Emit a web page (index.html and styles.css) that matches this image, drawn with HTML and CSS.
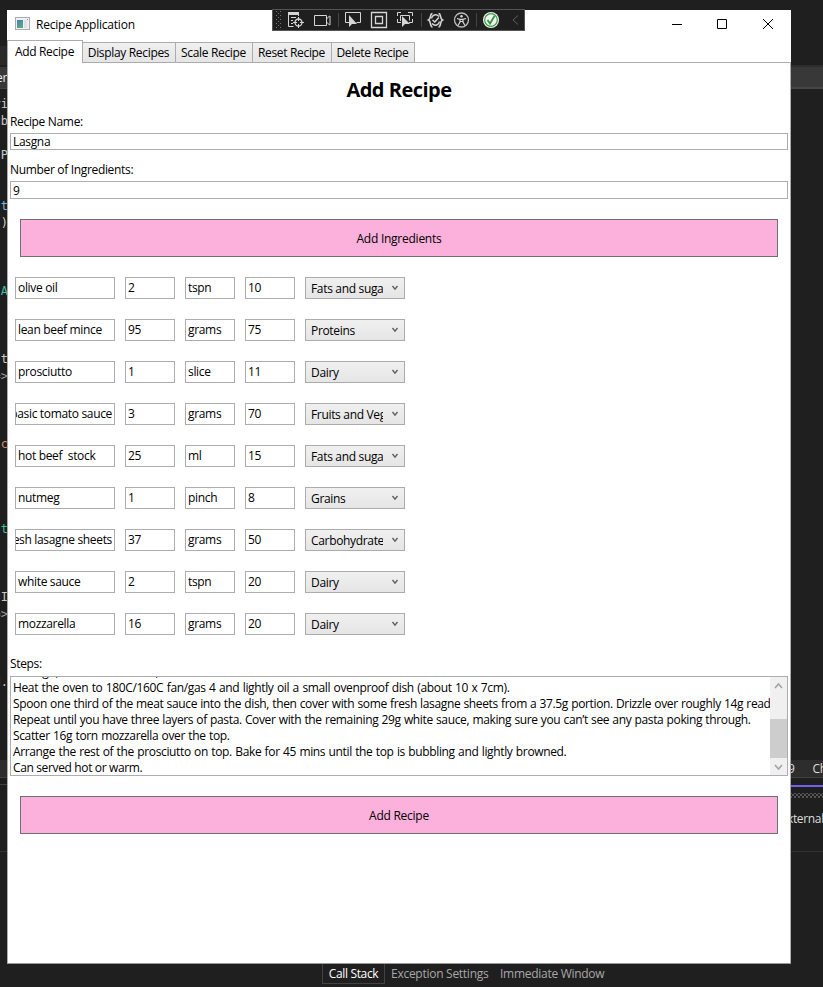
FILE: index.html
```html
<!DOCTYPE html>
<html lang="en">
<head>
<meta charset="utf-8">
<title>Recipe Application</title>
<link rel="stylesheet" href="styles.css">
</head>
<body>
<div class="desktop">
  <aside class="gutter-left">
    <div class="dock-top"></div>
    <div class="dock-tab"><span>er</span></div>
    <pre class="code"><b>ri</b>
<b>ub</b>

<b>P</b>


<b class="blue">ct</b>
<b>()</b>



<b class="teal">tA</b>



<b>It</b>
<b class="dim">=&gt;</b>



<b class="orange">tc</b>




<b class="teal">nt</b>



<b>dI</b>
<b class="dim">=&gt;</b>



<b><i>d</i>.</b>
</pre>
    <div class="status-left"></div>
    <div class="rule-left"></div>
    <div class="rule-low"></div>
  </aside>

  <main class="window">
    <header class="titlebar">
      <svg class="app-icon" width="15" height="13" viewBox="0 0 15 13"><defs><linearGradient id="g" x1="0" y1="0" x2="0.6" y2="1"><stop offset="0" stop-color="#4b7dae"/><stop offset="1" stop-color="#55ad87"/></linearGradient></defs><rect x=".5" y=".5" width="14" height="12" fill="#eef0f1" stroke="#a9adb1"/><rect x="2" y="3" width="6" height="8" fill="url(#g)"/><path d="M9 3h3v8H9z" fill="#dfe2e4"/><path d="M12 2h1v1h-1z" fill="#7d96ad"/></svg>
      <span class="title">Recipe Application</span>
      <svg class="controls" width="102" height="12" viewBox="0 0 102 12" fill="none" stroke="#000"><path d="M0 6.5h10M45.5 1.5h9v9h-9zM91 1l10 10M101 1L91 11"/></svg>
    </header>
    <nav class="tabs">
      <span class="tab active">Add Recipe</span>
      <span class="tab t2">Display Recipes</span>
      <span class="tab t3">Scale Recipe</span>
      <span class="tab t4">Reset Recipe</span>
      <span class="tab t5">Delete Recipe</span>
    </nav>
    <section class="page">
      <h1>Add Recipe</h1>
      <label>Recipe Name:</label>
      <div class="field first">Lasgna</div>
      <label>Number of Ingredients:</label>
      <div class="field">9</div>
      <button>Add Ingredients</button>
      <div class="ingredients" id="ingredients"></div>
      <label class="steps-label">Steps:</label>
      <div class="steps">
        <div class="steps-text">
          <p class="cut">through, about 20 minutes, to make the sauce.</p>
          <p class="w7">Heat the oven to 180C/160C fan/gas 4 and lightly oil a small ovenproof dish (about 10 x 7cm).</p>
          <p class="w4">Spoon one third of the meat sauce into the dish, then cover with some fresh lasagne sheets from a 37.5g portion. Drizzle over roughly 14g read</p>
          <p class="w4">Repeat until you have three layers of pasta. Cover with the remaining 29g white sauce, making sure you can’t see any pasta poking through.</p>
          <p>Scatter 16g torn mozzarella over the top.</p>
          <p>Arrange the rest of the prosciutto on top. Bake for 45 mins until the top is bubbling and lightly browned.</p>
          <p class="w0">Can served hot or warm.</p>
        </div>
        <div class="scrollbar">
          <svg width="17" height="17" viewBox="0 0 17 17" fill="none" stroke="#a3a3a3" stroke-width="1.6"><path d="M5 11l3.5-4 3.5 4"/></svg>
          <div class="thumb"></div>
          <svg width="17" height="17" viewBox="0 0 17 17" fill="none" stroke="#a3a3a3" stroke-width="1.6"><path d="M5 7l3.5 4L12 7"/></svg>
        </div>
      </div>
      <button>Add Recipe</button>
    </section>
  </main>

  <aside class="gutter-right">
    <div class="dock-bar"></div>
    <div class="status-right"><span class="nine">9</span><span>Ch</span></div>
    <div class="accent"></div>
    <div class="dots"></div>
    <div class="external">xternal</div>
    <div class="rule-right"></div>
  </aside>

  <footer class="bottom-tabs">
    <span class="bt current">Call Stack</span>
    <span class="bt exception">Exception Settings</span>
    <span class="bt immediate">Immediate Window</span>
  </footer>

  <div class="debug-bar">
    <svg width="253" height="22" viewBox="0 0 253 22" fill="none" stroke="#d6d6d6">
      <path d="M4.500 2v18M8.500 2v18" stroke="#777" stroke-dasharray="1 3"/><path d="M6.500 4v16" stroke="#777" stroke-dasharray="1 3"/>
      <path d="M16 4.500h11" stroke-width="3"/><path d="M16.500 4v13.500h5M19 8.500h5M19 11.500h2M19 14.500h2M26.500 5v2"/><circle cx="26.500" cy="13.500" r="3.500" stroke-width="1.300"/><path d="M26.500 8v4M26.500 15v4M21 13.500h4M28 13.500h4"/>
      <path d="M42.500 6.500h12v10h-12zM54.500 10l3-3h.5v9h-.5l-3-3"/>
      <path d="M66.500 4v14M149.500 4v14M204.500 4v14" stroke="#444"/>
      <path d="M77 13.500h-3.500v-10h15v10h-4"/><path d="M77 6v12l3-3h5z" fill="#d6d6d6" stroke="none"/>
      <path d="M99.500 3.500h15v15h-15zM103.500 7.500h7v7h-7z" stroke-width="1.300"/>
      <path d="M125.500 7V3.500h3.500M136 3.500h4.500V7M140.500 10v3.500H137M125.500 10v3.500H129M128.500 12V6.500h9v5"/><path d="M130 7v11l3-3h5z" fill="#d6d6d6" stroke="none"/>
      <path d="M160.500 4.500c-3 0-1 5-4 6.500 3 1.500 1 7 4 7M166.500 4.500c3 0 1 5 4 6.500-3 1.500-1 7-4 7" stroke-width="1.600"/><path d="M167 7.500c-3-3-7-1.500-7.500 2M160 14.500c3 3 7 1.500 7.500-2M160.500 11l2.300 2 4-4.500" stroke-width="1.500"/>
      <circle cx="189.500" cy="11" r="7" stroke="#bbb" stroke-width="1.300"/><circle cx="189.500" cy="7.300" r="1.300" fill="#d6d6d6" stroke="none"/><path d="M185 9.500l3 .8h3l3-.8M188 10v3l-2 3.500M191 10v3l2 3.500M188 12.500h3" stroke-width="1.200"/>
      <circle cx="219" cy="11" r="8" fill="#f2f2f2" stroke="none"/><circle cx="219" cy="11" r="6.300" stroke="#3f9e46" stroke-width="1.200"/><path d="M215.500 11l2.500 3.500 4.500-7.500" stroke="#32963a" stroke-width="1.800"/>
      <path d="M246 6.500l-5 4.500 5 4.500" stroke="#606060"/>
    </svg>
  </div>
</div>
<script src="app.js"></script>
</body>
</html>
```
FILE: styles.css
```css
* { box-sizing: border-box; }
body { margin: 0; background: #1f1f1f; color: #000; font: 12px/16px "Open Sans", "Noto Sans", sans-serif; letter-spacing: -0.33px; }
p, h1, pre { margin: 0; }
.desktop { position: relative; width: 823px; height: 987px; display: grid; grid-template-columns: 7px 784px 32px; grid-template-rows: 964px 23px; overflow: hidden; }

.gutter-left { display: flex; flex-direction: column; overflow: hidden; width: 7px; background: #1e1e1e; }
.dock-top { height: 67px; flex: none; background: linear-gradient(#1f1f1f 46px, #292929 46px, #292929 65px, #1f1f1f 65px); }
.dock-tab { height: 22px; flex: none; background: #383838; border-bottom: 1px solid #464646; color: #eee; display: flex; justify-content: flex-end; line-height: 21px; }
.code { flex: none; height: 671px; padding-top: 7px; font: 12px/17px "DejaVu Sans Mono", monospace; color: #c8c8c8; letter-spacing: 0; width: 15px; margin-left: -7px; text-align: right; }
.code b { font-weight: normal; }
.code i { font-style: normal; color: #ce9178; }
.code .blue { color: #77b9e4; }
.code .teal { color: #3fbda0; }
.code .orange { color: #d28e6b; }
.code .dim { color: #999; }
.status-left { flex: none; height: 18px; background: #2d2d2d; border-bottom: 1px solid #414141; }
.rule-left { flex: none; height: 7px; border-bottom: 1px solid #414141; }
.rule-low { flex: none; height: 67px; border-bottom: 1px solid #333; }

.window { margin-top: 10px; background: #fff; border-bottom: 1px solid #999; display: flex; flex-direction: column; min-width: 0; }
.titlebar { height: 30px; flex: none; display: flex; align-items: center; padding: 0 17px 0 8px; }
.app-icon { margin-top: -3px; }
.title { margin-left: 6px; letter-spacing: -0.22px; }
.controls { margin-left: auto; margin-top: -2px; }
.tabs { height: 22px; flex: none; display: flex; align-items: flex-end; }
.tab { height: 20px; border: 1px solid #acacac; border-left-width: 0; border-bottom: 0; background: linear-gradient(#f0f0f0, #e5e5e5); text-align: center; line-height: 20px; white-space: nowrap; padding-right: 1px; }
.tab.active { width: 76px; height: 23px; margin-bottom: -1px; position: relative; background: #fff; border-left-width: 1px; line-height: 22px; }
.t2 { width: 93px; }
.t3 { width: 77px; }
.t4 { width: 79px; }
.t5 { width: 83px; }
.page { flex: 1; border: 1px solid #acacac; border-bottom: 0; padding: 0 2px; display: flex; flex-direction: column; }
h1 { height: 50px; flex: none; padding-top: 13px; text-align: center; font-size: 20px; line-height: 27px; font-weight: 700; letter-spacing: -0.5px; }
label { flex: none; height: 20px; line-height: 17px; }
.field { flex: none; height: 18px; margin-bottom: 10px; border: 1px solid #abadb3; padding-left: 2px; line-height: 17px; }
.field.first { height: 17px; line-height: 15px; margin-bottom: 11px; }
button { flex: none; height: 38px; margin: 10px; padding: 1px 0 0; border: 1px solid #707070; border-radius: 0; background: #fcb0dc; font: inherit; letter-spacing: -0.25px; color: #000; }
.ingredients { height: 378px; flex: none; display: grid; grid-auto-rows: 42px; }
.row { display: flex; gap: 10px; padding: 10px 5px; }
.cell { width: 50px; height: 22px; border: 1px solid #abadb3; padding: 0 2px; line-height: 19px; overflow: hidden; white-space: pre; display: flex; }
.cell.name { width: 100px; }
.cell.end { justify-content: flex-end; }
.select { width: 100px; height: 22px; border: 1px solid #acacac; background: linear-gradient(#f0f0f0, #e5e5e5); display: flex; align-items: center; justify-content: space-between; padding: 0 5px; }
.select span { width: 72px; overflow: hidden; white-space: nowrap; line-height: 20px; padding-top: 1px; }
.select svg { margin-top: -1px; }
.steps-label { margin-top: 11px; height: 19px; margin-bottom: 1px; line-height: 16px; }
.steps { flex: none; height: 100px; margin-bottom: 10px; border: 1px solid #abadb3; display: flex; overflow: hidden; }
.steps-text { flex: 1; min-width: 0; padding-left: 2px; overflow: hidden; white-space: nowrap; letter-spacing: -0.36px; }
.steps-text p { height: 16px; word-spacing: 0.6px; }
.steps-text .w7 { word-spacing: 0.7px; }
.steps-text .w4 { word-spacing: 0.43px; }
.steps-text .w0 { word-spacing: 0; }
.steps-text .cut { margin-top: -13px; }
.scrollbar { width: 17px; background: #f0f0f0; display: flex; flex-direction: column; flex: none; }
.thumb { height: 39px; background: #cdcdcd; margin-top: auto; }

.gutter-right { overflow: hidden; color: #ddd; display: flex; flex-direction: column; }
.dock-bar { flex: none; margin-top: 65px; height: 24px; background: #383838; border-top: 2px solid #2d2d2d; border-bottom: 2px solid #464646; }
.status-right { flex: none; margin-top: 671px; height: 18px; background: #2d2d2d; border-bottom: 1px solid #414141; display: flex; gap: 18px; line-height: 18px; white-space: nowrap; }
.nine { margin-left: -3px; }
.accent { flex: none; margin-top: 7px; height: 2px; background: #7160e8; }
.dots { flex: none; margin-top: 6px; height: 5px; background: radial-gradient(circle, #5a5a5a 0.7px, transparent 0.8px) 0 0 / 4px 4px, radial-gradient(circle, #5a5a5a 0.7px, transparent 0.8px) 2px 2px / 4px 4px; }
.external { flex: none; height: 53px; padding-top: 13px; margin-left: -4px; white-space: nowrap; letter-spacing: -0.35px; }
.rule-right { height: 1px; background: #333; }

.bottom-tabs { grid-column: 1 / -1; padding-left: 322px; display: flex; color: #a8a8a8; white-space: nowrap; }
.bt { line-height: 19px; }
.current { width: 63px; height: 20px; border: 1px solid #424242; border-top: 0; text-align: center; color: #fff; }
.exception { margin-left: 6px; width: 109px; letter-spacing: -0.27px; }
.immediate { letter-spacing: -0.28px; }
.debug-bar { position: absolute; left: 272px; top: 9px; width: 253px; height: 22px; background: #1f1f1f; outline: 1px solid #555; outline-offset: -1px; }
.debug-bar svg { display: block; }
```
FILE: app.js
```js
const rows = [
  ["olive oil", "2", "tspn", "10", "Fats and suga"],
  ["lean beef mince", "95", "grams", "75", "Proteins"],
  ["prosciutto", "1", "slice", "11", "Dairy"],
  ["basic tomato sauce", "3", "grams", "70", "Fruits and Vegetables"],
  ["hot beef  stock", "25", "ml", "15", "Fats and suga"],
  ["nutmeg", "1", "pinch", "8", "Grains"],
  ["fresh lasagne sheets", "37", "grams", "50", "Carbohydrate"],
  ["white sauce", "2", "tspn", "20", "Dairy"],
  ["mozzarella", "16", "grams", "20", "Dairy"]
];
document.getElementById("ingredients").innerHTML = rows.map(r =>
  `<div class="row"><div class="cell name${r[0].length > 16 ? " end" : ""}"><span>${r[0]}</span></div>` +
  r.slice(1, 4).map(v => `<div class="cell">${v}</div>`).join("") +
  `<div class="select"><span>${r[4]}</span><svg width="8" height="6" viewBox="0 0 8 6" fill="none" stroke="#606060" stroke-width="1.4"><path d="M1.500 1L4 4.200 6.500 1"/></svg></div></div>`
).join("");
```
